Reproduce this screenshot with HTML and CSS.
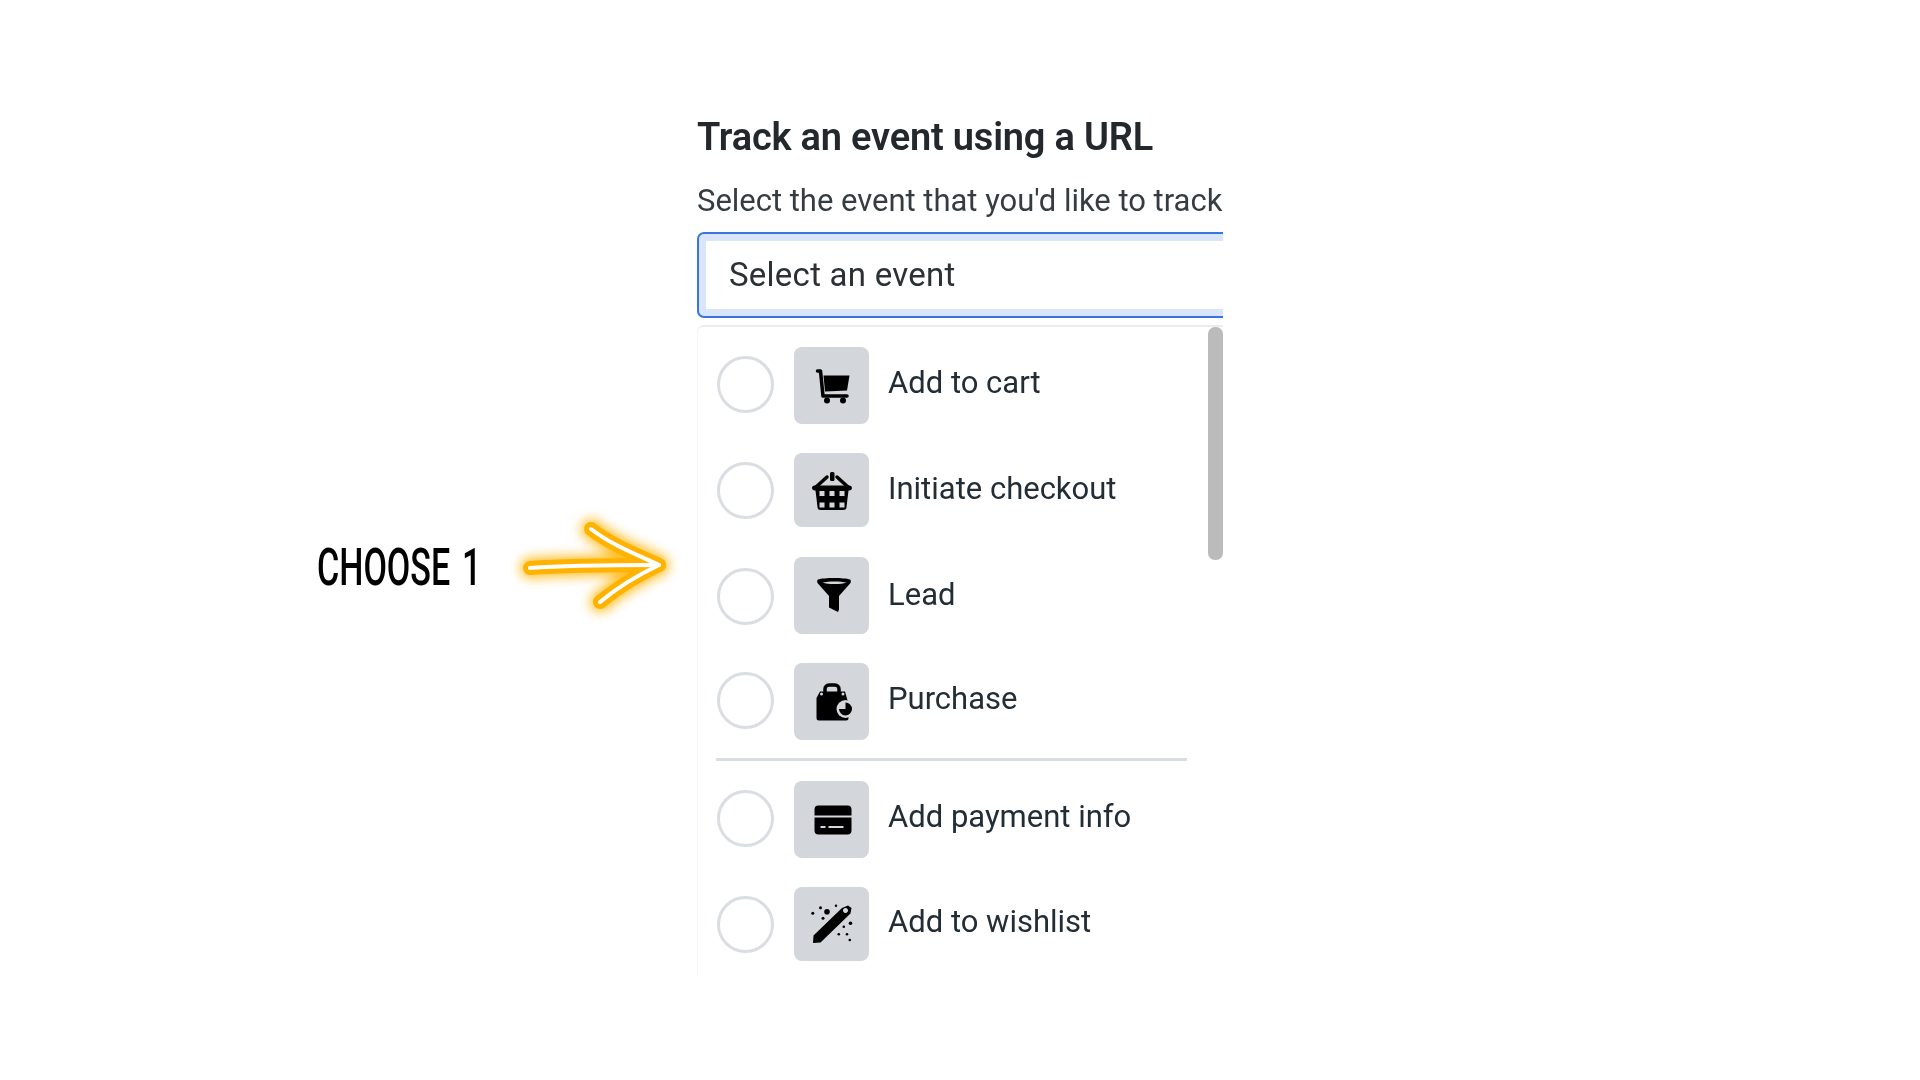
FILE: index.html
```html
<!DOCTYPE html>
<html lang="en">
<head>
<meta charset="utf-8">
<title>Track an event using a URL</title>
<link rel="stylesheet" href="styles.css">
</head>
<body>
<main class="slide">
  <div class="callout">
    <span class="callout-label">CHOOSE 1</span>
    <svg class="arrow" viewBox="0 0 185 125" aria-hidden="true">
      <defs>
        <filter id="glow" x="-25%" y="-40%" width="150%" height="180%"><feGaussianBlur stdDeviation="6"/></filter>
      </defs>
      <g fill="none" stroke-linecap="round" stroke-linejoin="round">
        <g stroke="#ffb300" stroke-width="20" filter="url(#glow)" opacity=".85">
          <path d="M27 63C65 60 115 60 156 60"/><path d="M88 24C110 41 135 50 156 60C135 70 115 82 97 97"/>
        </g>
        <g stroke="#ffb300" stroke-width="14">
          <path d="M27 63C65 60 115 60 156 60"/><path d="M88 24C110 41 135 50 156 60C135 70 115 82 97 97"/>
        </g>
        <g stroke="#fff" stroke-width="4">
          <path d="M27 63C65 60 115 60 156 60"/><path d="M88 24C110 41 135 50 156 60C135 70 115 82 97 97"/>
        </g>
      </g>
    </svg>
  </div>

  <section class="panel">
    <h1 class="title">Track an event using a URL</h1>
    <p class="hint">Select the event that you'd like to track</p>
    <div class="select">Select an event</div>
    <div class="menu">
      <div class="scroll-thumb"></div>
      <div class="row">
        <span class="radio"></span>
        <span class="tile"><svg class="ico" viewBox="0 0 40 40"><path d="M11.500 9.500H37.500L35 24.500 13 25.500z"/><path class="ico-line" d="M5.500 5H8.500L11 30H35"/><circle cx="15" cy="34.500" r="3"/><circle cx="31" cy="34.500" r="3"/></svg></span>
        <span class="label label-up">Add to cart</span>
      </div>
      <div class="row row-short">
        <span class="radio"></span>
        <span class="tile tile-short"><svg class="ico" viewBox="0 0 40 40"><path class="ico-line" d="M4 17 15 7M25 7 36 17"/><rect x="18" y="2" width="4.500" height="9" rx="1.500"/><path fill-rule="evenodd" d="M2.500 15.500H37.500a2.500 2.500 0 0 1 0 5H36.500L34.500 37A3 3 0 0 1 31.500 40H8.500A3 3 0 0 1 5.500 37L3.500 20.500H2.500a2.500 2.500 0 0 1 0-5zM7.500 21v5h5v-5zM17.500 21v5h5v-5zM27.500 21v5h5v-5zM7.500 32.500v5h5v-5zM17.500 32.500v5h5v-5zM27.500 32.500v5h5v-5z"/></svg></span>
        <span class="label label-up">Initiate checkout</span>
      </div>
      <div class="row">
        <span class="radio radio-low"></span>
        <span class="tile"><svg class="ico" viewBox="0 0 40 40"><path fill-rule="evenodd" d="M6 3.500C12 1.500 32 1.500 38 3.500 39 4 39 6 38.500 7L27 20V33.500L26 36 17 31.500V20L5.500 7C5 6 5 4 6 3.500zM10.500 6.500C16 8.500 29 8.500 34.500 6.500 29 5 16 5 10.500 6.500z"/></svg></span>
        <span class="label label-up-sm">Lead</span>
      </div>
      <div class="row row-last">
        <span class="radio"></span>
        <span class="tile"><svg class="ico" viewBox="0 0 40 40"><path class="ico-line" d="M13 13V7a4 4 0 0 1 4-4h6a4 4 0 0 1 4 4v6"/><path d="M8 9.500H33L36.500 22V36a2.500 2.500 0 0 1-2.500 2.500H7A2.500 2.500 0 0 1 4.500 36V16z"/><circle class="ico-cut" cx="9.500" cy="12" r="1.500"/><circle class="ico-cut" cx="31" cy="12" r="1.500"/><circle class="ico-cut" cx="33.500" cy="27" r="9"/><path d="M33.500 20.500a6.500 6.500 0 1 1-6.500 6.500h6.500z"/></svg></span>
        <span class="label label-up">Purchase</span>
      </div>
      <hr class="rule">
      <div class="row">
        <span class="radio"></span>
        <span class="tile"><svg class="ico" viewBox="0 0 40 40"><path fill-rule="evenodd" d="M6.500 5.500H35.500a4 4 0 0 1 4 4v6H2.500v-6a4 4 0 0 1 4-4zM2.500 17.500H39.500V30.500a4 4 0 0 1-4 4H6.500a4 4 0 0 1-4-4zM8.500 26v2h5v-2zM16.500 26v2h15v-2z"/></svg></span>
        <span class="label label-up">Add payment info</span>
      </div>
      <div class="row row-short">
        <span class="radio"></span>
        <span class="tile tile-short"><svg class="ico" viewBox="0 0 40 40"><path fill-rule="evenodd" d="M1.500 31.500 30 4 36 1.500 39.500 4 38.500 9.500 8.500 38.500 1 39zM33.500 4a2.500 2.500 0 1 0 .01 0z"/><circle cx="15" cy="7.700" r="2.800"/><circle cx="8.500" cy="3.700" r="1.500"/><circle cx=".8" cy="9.300" r="1.500"/><circle cx="11" cy="14.300" r="1.500"/><circle cx="24" cy="1.700" r="1.200"/><circle cx="38.500" cy="19.300" r="1.800"/><circle cx="31.800" cy="22.700" r="1.300"/><circle cx="26.800" cy="30.300" r="1.300"/><circle cx="35" cy="30.300" r="1.300"/><circle cx="37.800" cy="36" r="1.300"/></svg></span>
        <span class="label label-up-lg">Add to wishlist</span>
      </div>
    </div>
  </section>
</main>
</body>
</html>
```
FILE: styles.css
```css
* { box-sizing: border-box; }
html, body { margin: 0; background: #fff; }
.slide {
  width: 1920px;
  height: 1080px;
  overflow: hidden;
  display: flex;
  align-items: flex-start;
  padding-left: 317px;
  font-family: Roboto, "Liberation Sans", sans-serif;
}
.callout {
  display: flex;
  align-items: center;
  width: 380px;
  margin-top: 505px;
  height: 125px;
}
.callout-label {
  width: 186px;
  font-family: Roboto, sans-serif;
  font-weight: 500;
  font-size: 52px;
  line-height: 1;
  word-spacing: 5px;
  color: #000;
  white-space: nowrap;
  transform-origin: left center;
  transform: scaleX(.655);
}
.arrow { width: 185px; height: 125px; flex: none; overflow: visible; }

.panel {
  width: 526px;
  height: 860px;
  margin-top: 115px;
  overflow: hidden;
  color: #1c2b33;
  filter: blur(.5px);
}
.title {
  margin: 0;
  font-size: 38px;
  line-height: 44px;
  font-weight: 600;
  letter-spacing: -.2px;
  white-space: nowrap;
  color: #23282c;
}
.hint {
  margin: 22px 0 0;
  font-size: 31px;
  line-height: 40px;
  letter-spacing: -.02px;
  white-space: nowrap;
  color: #363d42;
}
.select {
  width: 560px;
  height: 86px;
  margin-top: 11px;
  padding: 0 0 2px 30px;
  display: flex;
  align-items: center;
  border: 2px solid #3a74e2;
  border-radius: 7px;
  box-shadow: inset 0 0 0 7px #d8e5fb;
  font-size: 33px;
  letter-spacing: .25px;
  color: #2c3135;
}
.menu {
  position: relative;
  margin-top: 7px;
  height: 650px;
  padding: 20px 0 0 19px;
  border-top: 2px solid #ececec;
  border-left: 1px solid #f6f6f6;
  border-radius: 7px 0 0 0;
}
.scroll-thumb {
  position: absolute;
  right: 0;
  top: 0;
  width: 15px;
  height: 233px;
  background: #bbb;
  border-radius: 7px;
}
.row {
  display: flex;
  align-items: flex-start;
  margin-bottom: 29px;
}
.row-short { margin-bottom: 30px; }
.row-last { margin-bottom: 18px; }
.radio {
  width: 57px;
  height: 57px;
  flex: none;
  margin-top: 9px;
  border: 3px solid #dadde1;
  border-radius: 50%;
  background: #fff;
}
.radio-low { margin-top: 11px; }
.tile {
  width: 75px;
  height: 77px;
  flex: none;
  margin-left: 20px;
  display: flex;
  align-items: center;
  justify-content: center;
  background: #d3d6da;
  border-radius: 8px;
}
.tile-short { height: 74px; }
.ico { width: 40px; height: 40px; fill: #000; overflow: visible; }
.ico-line { fill: none; stroke: #000; stroke-width: 3.5; stroke-linecap: round; stroke-linejoin: round; }
.ico-cut { fill: #d3d6da; }
.label {
  margin-left: 19px;
  font-size: 31px;
  line-height: 77px;
  white-space: nowrap;
  color: #222d35;
}
.label-up { margin-top: -3px; }
.label-up-sm { margin-top: -1px; }
.label-up-lg { margin-top: -4px; }
.rule {
  width: 471px;
  height: 3px;
  margin: 0 0 20px -1px;
  border: 0;
  background: #dadde1;
}
```
